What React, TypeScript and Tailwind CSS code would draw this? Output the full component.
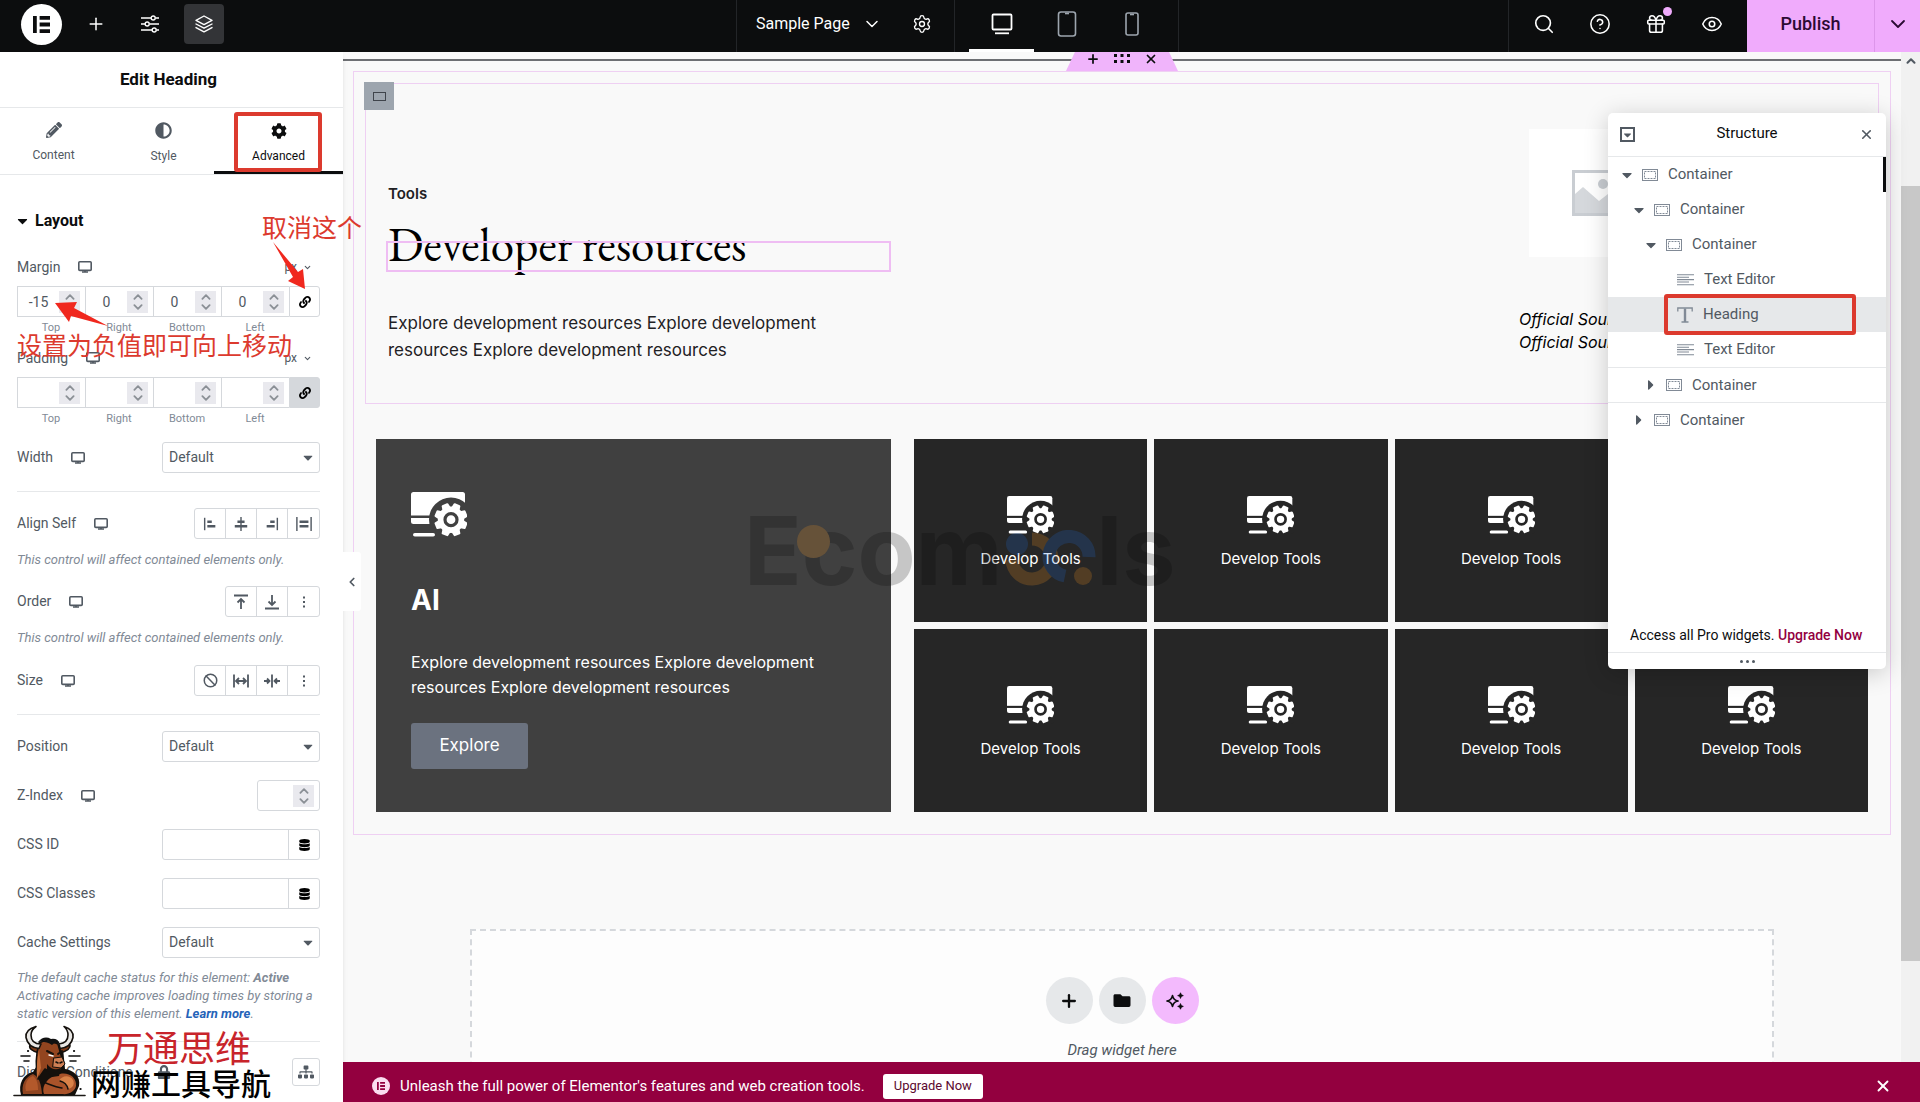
import type { ReactNode } from 'react'
import { Ban, ChevronDown, ChevronLeft, ChevronUp, CircleHelp, Eye, Gift, Plus, Search, Settings, X } from 'lucide-react'
import { FaAdjust, FaCaretDown, FaCaretRight, FaCog, FaDatabase, FaFolder, FaLink, FaLock, FaPencilAlt, FaSitemap } from 'react-icons/fa'

/* ---------- Icons ---------- */

const ElementorMark = ({ className }: { className: string }) => (
    <svg viewBox="0 0 18 18" className={className} fill="currentColor">
        <path d="M0 0h4v18H0zM7 0h11v4H7zM7 7h11v4H7zM7 14h11v4H7z" />
    </svg>
)

const SlidersIcon = () => (
    <svg viewBox="0 0 18 18" className="h-[18px] w-[18px]" fill="none" stroke="currentColor" strokeWidth="1.4">
        <path d="M0 3h10M14.5 3H18M0 9h4M8.5 9H18M0 15h11M15.5 15H18" />
        <circle cx="12.2" cy="3" r="2" />
        <circle cx="6.2" cy="9" r="2" />
        <circle cx="13.2" cy="15" r="2" />
    </svg>
)

const LayersIcon = () => (
    <svg viewBox="0 0 18 18" className="h-[18px] w-[18px]" fill="none" stroke="currentColor" strokeWidth="1.4" strokeLinejoin="round" strokeLinecap="round">
        <path d="M9 1l8 4.3-8 4.3-8-4.3zM1 9l8 4.2L17 9M1 12.6l8 4.2 8-4.2" />
    </svg>
)

const DesktopIcon = () => (
    <svg viewBox="0 0 22 22" className="h-[22px] w-[22px]" fill="none" stroke="currentColor" strokeWidth="1.8" strokeLinejoin="round">
        <rect x="1.5" y="1.5" width="19" height="15" rx="1" />
        <path d="M4 20.3h14" />
    </svg>
)

const TabletIcon = () => (
    <svg viewBox="0 0 20 26" className="h-[26px] w-[20px]" fill="none" stroke="currentColor" strokeWidth="1.6">
        <rect x="1.5" y="1" width="17" height="24" rx="2.5" />
        <path d="M8 2.5h4" />
    </svg>
)

const PhoneIcon = () => (
    <svg viewBox="0 0 14 24" className="h-6 w-[14px]" fill="none" stroke="currentColor" strokeWidth="1.6">
        <rect x="1" y="1" width="12" height="22" rx="2" />
        <path d="M5 2.5h4" />
    </svg>
)

const ScreenIcon = () => (
    <svg viewBox="0 0 14 12" className="h-3 w-[14px] text-[#515962]" fill="none" stroke="currentColor" strokeWidth="1.6">
        <rect x="0.8" y="0.8" width="12.4" height="8.6" rx="1" />
        <path d="M4 11h6M7 9v2" />
    </svg>
)

const ContainerIcon = () => (
    <svg viewBox="0 0 16 12" className="h-3 w-4" fill="none" stroke="currentColor">
        <rect x="0.5" y="0.5" width="15" height="11" strokeWidth="1" />
        <rect x="2.5" y="2.5" width="11" height="7" strokeWidth="1" strokeDasharray="2 1" />
    </svg>
)

const TextIcon = () => (
    <svg viewBox="0 0 17 12" className="h-3 w-[17px]" stroke="currentColor" strokeWidth="1.1">
        <path d="M0 .8h17M0 3.2h12M0 5.6h17M0 8h12M0 10.8h17" />
    </svg>
)

const HeadingIcon = () => (
    <svg viewBox="0 0 16 16" className="h-4 w-4" fill="none" stroke="currentColor">
        <path d="M.8 4.5V1h14.4v3.5M4.5 15h7" strokeWidth="1.3" />
        <path d="M8 1.5V15" strokeWidth="2.4" />
    </svg>
)

const SparkleIcon = () => (
    <svg viewBox="0 0 18 18" className="h-[18px] w-[18px]">
        <path d="M6.5 3.6Q7.4 8.1 12 9 7.4 9.9 6.5 14.4 5.6 9.9 1 9 5.6 8.1 6.5 3.6z" fill="none" stroke="currentColor" strokeWidth="1.7" strokeLinejoin="round" />
        <path d="M14.5.8l.8 2 2 .8-2 .8-.8 2-.8-2-2-.8 2-.8zM14.5 11.6l.8 2 2 .8-2 .8-.8 2-.8-2-2-.8 2-.8z" fill="currentColor" stroke="currentColor" strokeWidth=".8" />
    </svg>
)

const alignIcons = [
    { rule: 'M3 2v14', bars: 'M6 6.5h5M6 11.5h9' },
    { rule: 'M9 1v16', bars: 'M5 6.5h8M2 11.5h14' },
    { rule: 'M15 2v14', bars: 'M7 6.5h5M3 11.5h9' },
    { rule: 'M1 1v16M17 1v16', bars: 'M4 6.5h10M4 11.5h10' },
]

const AlignIcon = ({ rule, bars }: { rule: string; bars: string }) => (
    <svg viewBox="0 0 18 18" className="h-4 w-4" fill="none" stroke="currentColor">
        <path d={rule} strokeWidth="1.6" />
        <path d={bars} strokeWidth="2.8" />
    </svg>
)

const StrokeIcon = ({ d }: { d: string }) => (
    <svg viewBox="0 0 16 16" className="h-4 w-4" fill="none" stroke="currentColor" strokeWidth="1.8">
        <path d={d} />
    </svg>
)

const DotsIcon = () => (
    <svg viewBox="0 0 4 14" className="h-[14px] w-1" fill="currentColor">
        <path d="M1 1.5h2v2H1zM1 6h2v2H1zM1 10.5h2v2H1z" />
    </svg>
)

const teeth = [0, 45, 90, 135, 180, 225, 270, 315]

const DevIcon = ({ cut, className }: { cut: string; className: string }) => (
    <svg viewBox="0 0 56 45" className={className}>
        <rect width="54" height="32" rx="2.5" fill="#fff" />
        <rect y="23.5" width="54" height="2.5" fill={cut} />
        <circle cx="40" cy="27.5" r="22" fill={cut} />
        <rect x="2" y="41" width="22" height="3.6" rx="1.8" fill="#fff" />
        <circle cx="40" cy="27.7" r="13.2" fill="#fff" />
        {teeth.map((a) => (
            <path key={a} d="M35.5 17l1-5.3q.3-.7 1-.7h5q.7 0 1 .7l1 5.3z" fill="#fff" transform={`rotate(${a + 22.5} 40 27.7)`} />
        ))}
        <circle cx="40" cy="27.7" r="6" fill="#fff" stroke={cut} strokeWidth="3.2" />
    </svg>
)

const Bull = () => (
    <svg viewBox="0 0 74 74" className="h-[74px] w-[74px] shrink-0" strokeLinejoin="round" strokeLinecap="round">
        <path d="M1 71.5h71" stroke="#1c1a17" strokeWidth="1.6" />
        <path d="M8 32h9M11 37h5M56 32h11M57 37h6" stroke="#111" strokeWidth="1.6" />
        <path d="M15 27h.1M61 27h.1M67.500 65h.1" stroke="#111" strokeWidth="2.2" />
        {/* body */}
        <path d="M8 71C5 60 10 50 20 48l5-8 1-15 24-1 2 21c8 1 16 7 14 17l-4 9z" fill="#14100c" />
        <path d="M10 70c-2-9 2-17 10-20 6 3 8 9 9 20z" fill="#8f4420" />
        <path d="M13 67c-2-6 1-13 7-15 4 3 5 8 5 14z" fill="#b3592b" />
        <path d="M31 70c-3-9 5-18 16-20 9-2 17 4 16 12-1 5-7 9-14 8z" fill="#a9532a" />
        <path d="M46 57c3-6 11-6 14-1 2 4 0 8-5 9-2-4-5-7-9-8z" fill="#d98248" />
        <path d="M30 58c6 2 12 5 19 6M47 57c4 1 7 4 8 8" stroke="#14100c" strokeWidth="1.5" fill="none" />
        {/* head */}
        <path d="M26 24l-9-3q-2 5 9 8zM47 24l10-3q1 5-10 8z" fill="#7c3917" stroke="#14100c" strokeWidth="1.6" />
        <path d="M26 19q9-5 19 1l3 11 3 9-4 8-7 2-8-5-7 10q-4-17 1-36z" fill="#93451f" stroke="#14100c" strokeWidth="1.6" />
        <path d="M26 26q-3 14-2 29l4-11z" fill="#c56d38" />
        <path d="M41 34l8-1 3 7-4 4-8-1z" fill="#cf8055" stroke="#14100c" />
        <path d="M43 38l2 1M49 38l-2 1" stroke="#14100c" strokeWidth="1.6" />
        <path d="M34 27l6 3M49 27l-4 3" stroke="#14100c" strokeWidth="2" />
        <path d="M36 31l4 1" stroke="#fff" strokeWidth="1.4" />
        <path d="M34 40q6 8 14 4l-2 8-7 1-5-5z" fill="#14100c" />
        <path d="M25 18q6-7 13-3 7-1 9 5-6-2-8 1-6-4-14-3z" fill="#111" />
        {/* horns */}
        <path d="M27 20q-10 0-10-9 0-5 5-8.500-11 3-10 11 2 10 13 11zM45 20q9-1 9-9 0-5-4-8.500 10 3 9 11-2 10-13 11z" transform="translate(1 0)" fill="#e9e7e4" stroke="#14100c" strokeWidth="1.6" />
    </svg>
)

/* ---------- Sidebar ---------- */

const Field = ({ label, id, screen, children }: { label: string; id?: string; screen?: boolean; children: ReactNode }) => (
    <div className="flex h-[31px] items-center justify-between">
        <div className="flex items-center gap-[18px]">
            <label htmlFor={id}>{label}</label>
            {screen && <ScreenIcon />}
        </div>
        {children}
    </div>
)

const Select = ({ id }: { id: string }) => (
    <div className="relative h-full w-[158px]">
        <select id={id} className="h-full w-full appearance-none rounded-[3px] border border-[#d5d8dc] bg-white px-1.5 text-[14px]">
            <option>Default</option>
        </select>
        <FaCaretDown className="pointer-events-none absolute right-1.5 top-2 h-[15px] w-3" />
    </div>
)

const Stepper = () => (
    <span className="flex h-[22px] w-[21px] shrink-0 flex-col items-center justify-center gap-1 bg-[#e9e9ee] text-[#8b9096]">
        <ChevronUp className="h-1.5 w-3" viewBox="4 7 16 10" strokeWidth={3} />
        <ChevronDown className="h-1.5 w-3" viewBox="4 7 16 10" strokeWidth={3} />
    </span>
)

const sides = ['Top', 'Right', 'Bottom', 'Left']

const Dimensions = ({ name, values, linked }: { name: string; values: string[]; linked?: boolean }) => (
    <div>
        <div className="flex h-5 items-center justify-between">
            <div className="flex items-center gap-[18px]">
                <span>{name}</span>
                <ScreenIcon />
            </div>
            <button className="flex items-center gap-1.5 pr-2 text-[12px]">px <ChevronDown className="h-[9px] w-[9px]" strokeWidth={3} /></button>
        </div>
        <div className="mt-[9px] flex">
            {sides.map((side, i) => (
                <div key={side} className="w-[68px]">
                    <div className="flex h-[31px] items-center border-y border-l border-[#d5d8dc] pr-[5px]">
                        <input id={`${name}-${side}`} defaultValue={values[i]} className="h-full w-0 flex-1 text-center text-[14px] outline-none" />
                        <Stepper />
                    </div>
                    <label htmlFor={`${name}-${side}`} className="mt-1 block text-center text-[11px] leading-[14px] text-[#818a96]">{side}</label>
                </div>
            ))}
            <button aria-label="Link values" className={linked ? 'flex h-[31px] flex-1 items-center justify-center rounded-r-[3px] border border-[#d5d8dc] bg-[#d5d8dc] text-black' : 'flex h-[31px] flex-1 items-center justify-center rounded-r-[3px] border border-[#d5d8dc] text-black'}>
                <FaLink className="h-3 w-3" />
            </button>
        </div>
    </div>
)

const Choices = ({ icons }: { icons: ReactNode[] }) => (
    <div className="flex h-full divide-x divide-[#d5d8dc] rounded-[3px] border border-[#d5d8dc]">
        {icons.map((icon, i) => (
            <button key={i} className="flex w-[31px] items-center justify-center">{icon}</button>
        ))}
    </div>
)

const Note = () => <p className="mt-3 text-[13px] italic leading-[18px] text-[#818a96]">This control will affect contained elements only.</p>

const Divider = () => <hr className="mb-4 mt-[18px] border-[#e6e8ea]" />

const TagInput = ({ id }: { id: string }) => (
    <div className="flex h-full w-[158px] rounded-[3px] border border-[#d5d8dc]">
        <input id={id} className="w-0 flex-1 px-2 outline-none" />
        <button aria-label="Dynamic tags" className="flex w-[31px] items-center justify-center border-l border-[#d5d8dc] text-black">
            <FaDatabase className="h-3 w-[11px]" />
        </button>
    </div>
)

const Sidebar = () => (
    <aside className="relative z-10 flex w-[343px] shrink-0 flex-col bg-white text-[14px] text-[#515962] shadow-md">
        <h1 className="flex h-[55px] items-center justify-center pr-1.5 text-[17px] font-bold text-[#0c0d0e]">Edit Heading</h1>
        <nav className="grid h-[68px] grid-cols-[107px_107px_1fr] border-y border-[#e6e8ea] text-[12px]">
            <button className="flex flex-col items-center justify-center gap-2 pt-1">
                <FaPencilAlt className="h-4 w-4" />
                Content
            </button>
            <button className="flex flex-col items-center justify-center gap-2 pl-1.5 pt-1">
                <FaAdjust className="h-[17px] w-[17px]" />
                Style
            </button>
            <button className="relative flex flex-col items-center justify-center gap-2 border-b-[3px] border-[#0c0d0e] pt-2 text-[#0c0d0e]">
                <FaCog className="h-4 w-4" />
                Advanced
                <span className="absolute left-5 top-1 h-[60px] w-[88px] rounded-[3px] border-4 border-[#dc3a2e]" />
            </button>
        </nav>

        <div className="flex flex-col pl-[17px] pr-[23px] pt-[34px]">
            <h2 className="flex h-6 items-center gap-[7px] text-[16px] font-bold text-[#0c0d0e]">
                <FaCaretDown className="h-4 w-[11px]" />
                Layout
            </h2>

            <div className="relative mt-6">
                <Dimensions name="Margin" values={['-15', '0', '0', '0']} />
                {/* Annotations */}
                <p className="absolute -top-[46px] left-[245px] whitespace-nowrap font-['Noto_Sans_CJK_SC',sans-serif] text-[25px] leading-[30px] text-[#dc3a2e]">取消这个</p>
                <svg viewBox="0 0 60 60" className="absolute -top-4 left-[250px] h-[60px] w-[60px]" fill="#f0281e">
                    <path d="M6 1l25 30 5-3 2 20-17-8 5-4z" />
                </svg>
                <svg viewBox="0 0 60 40" className="absolute left-[34px] top-[38px] h-10 w-[60px]" fill="#f0281e">
                    <path d="M4 8l22-1-3 6 34 18-37-10-2 6z" />
                </svg>
                <p className="absolute left-0 top-[72px] z-10 whitespace-nowrap font-['Noto_Sans_CJK_SC',sans-serif] text-[25px] leading-[30px] text-[#dc3a2e]">设置为负值即可向上移动</p>
            </div>
            <div className="mb-4 mt-[13px]">
                <Dimensions name="Padding" values={['', '', '', '']} linked />
            </div>
            <Field label="Width" id="width" screen><Select id="width" /></Field>

            <Divider />
            <Field label="Align Self" screen>
                <Choices icons={alignIcons.map((icon) => <AlignIcon key={icon.rule} {...icon} />)} />
            </Field>
            <Note />
            <div className="mt-[17px]">
                <Field label="Order" screen>
                    <Choices icons={[
                        <StrokeIcon key="start" d="M1 1.500h14M8 15V5M4.500 8.500L8 5l3.500 3.500" />,
                        <StrokeIcon key="end" d="M1 14.500h14M8 1v10M4.500 7.500L8 11l3.500-3.500" />,
                        <DotsIcon key="more" />,
                    ]} />
                </Field>
                <Note />
            </div>
            <div className="mt-[18px]">
                <Field label="Size" screen>
                    <Choices icons={[
                        <Ban key="none" className="h-[15px] w-[15px]" strokeWidth={2.400} />,
                        <StrokeIcon key="grow" d="M1 1.500v13M15 1.500v13M3 8h10M6 5L3 8l3 3M10 5l3 3-3 3" />,
                        <StrokeIcon key="shrink" d="M8 1.500v13M0 8h5.500M16 8h-5.500M3 5.500L5.500 8 3 10.500M13 5.500L10.500 8l2.500 2.500" />,
                        <DotsIcon key="more" />,
                    ]} />
                </Field>
            </div>

            <Divider />
            <div className="flex flex-col gap-[18px]">
                <Field label="Position" id="position"><Select id="position" /></Field>
                <Field label="Z-Index" id="z-index" screen>
                    <div className="flex h-full w-[63px] items-center rounded-[3px] border border-[#d5d8dc] pr-[5px]">
                        <input id="z-index" className="h-full w-0 flex-1 outline-none" />
                        <Stepper />
                    </div>
                </Field>
                <Field label="CSS ID" id="css-id"><TagInput id="css-id" /></Field>
                <Field label="CSS Classes" id="css-classes"><TagInput id="css-classes" /></Field>
                <Field label="Cache Settings" id="cache"><Select id="cache" /></Field>
            </div>
            <p className="mt-[11px] whitespace-nowrap text-[13px] italic leading-[18px] text-[#818a96]">
                The default cache status for this element: <b>Active</b><br />
                Activating cache improves loading times by storing a<br />
                static version of this element. <a href="#" className="font-bold text-[#2563b8]">Learn more</a>.
            </p>
            <Divider />
            <div className="flex h-7 items-center justify-between">
                <span className="flex items-center gap-6">Display Conditions <FaLock className="h-[14px] w-[14px]" /></span>
                <button aria-label="Edit conditions" className="flex h-7 w-7 items-center justify-center rounded-[3px] border border-[#d5d8dc]">
                    <FaSitemap className="h-4 w-4" />
                </button>
            </div>
        </div>

        {/* Site stamp */}
        <div className="absolute bottom-0 left-[13px] flex items-end pb-1 font-['Noto_Sans_CJK_SC',sans-serif]">
            <Bull />
            <div className="ml-1 flex flex-col whitespace-nowrap">
                <span className="pl-4 text-[36px] leading-[40px] text-[#c8242b]">万通思维</span>
                <span className="text-[30px] font-medium leading-[32px] text-black">网赚工具导航</span>
            </div>
        </div>

        <button aria-label="Collapse panel" className="absolute -right-[18px] top-[500px] flex h-[59px] w-[18px] items-center justify-center rounded-r-[3px] bg-white">
            <ChevronLeft className="h-[14px] w-[14px]" strokeWidth={3} />
        </button>
    </aside>
)

/* ---------- Structure panel ---------- */

const tree = [
    { name: 'Container', pad: 'pl-[13px]', open: true },
    { name: 'Container', pad: 'pl-[25px]', open: true },
    { name: 'Container', pad: 'pl-[37px]', open: true },
    { name: 'Text Editor', pad: 'pl-[69px]' },
    { name: 'Heading', pad: 'pl-[69px]' },
    { name: 'Text Editor', pad: 'pl-[69px]' },
    { name: 'Container', pad: 'pl-[37px] border-t border-[#e6e8ea]', open: false },
    { name: 'Container', pad: 'pl-[25px] border-t border-[#e6e8ea]', open: false },
]

const Structure = () => (
    <section className="absolute right-[34px] top-[61px] z-10 flex h-[556px] w-[278px] flex-col rounded-[5px] bg-white text-[15px] text-[#515962] shadow-[0_4px_24px_rgba(0,0,0,0.2)]">
        <header className="flex h-11 shrink-0 items-center justify-between border-b border-[#e6e8ea] px-3">
            <button aria-label="Collapse all" className="flex h-[15px] w-[15px] items-center justify-center border-2 border-[#515962]">
                <FaCaretDown className="h-3 w-3" />
            </button>
            <h2 className="pb-0.5 text-[#0c0d0e]">Structure</h2>
            <button aria-label="Close structure"><X className="h-[15px] w-[15px]" strokeWidth={2.500} /></button>
        </header>
        <ul className="relative flex-1">
            {tree.map((item, i) => (
                <li key={i} className={item.name === 'Heading' ? 'relative bg-[#e6e8ea]' : 'relative'}>
                    <button className={`flex h-[35px] w-full items-center ${item.pad}`}>
                        {item.open === true && <FaCaretDown className="mr-[9px] h-4 w-3" />}
                        {item.open === false && <FaCaretRight className="mr-[9px] h-4 w-3" />}
                        <span className="mr-[10px] text-[#818a96]">
                            {item.name === 'Container' && <ContainerIcon />}
                            {item.name === 'Text Editor' && <TextIcon />}
                            {item.name === 'Heading' && <HeadingIcon />}
                        </span>
                        {item.name}
                    </button>
                    {item.name === 'Heading' && <span className="absolute -top-[3px] left-14 h-[41px] w-[192px] rounded-[3px] border-4 border-[#dc3a2e]" />}
                </li>
            ))}
            <li className="absolute right-0 top-0 h-[35px] w-[3px] bg-[#0c0d0e]" />
        </ul>
        <p className="whitespace-nowrap px-[22px] pb-2 text-[14px] leading-[18px] text-[#0c0d0e]">
            Access all Pro widgets. <a href="#" className="font-medium text-[#93003f]">Upgrade Now</a>
        </p>
        <footer className="flex h-[17px] items-center justify-center gap-[3px] border-t border-[#e6e8ea]">
            <span className="h-[3px] w-[3px] rounded-full bg-[#515962]" />
            <span className="h-[3px] w-[3px] rounded-full bg-[#515962]" />
            <span className="h-[3px] w-[3px] rounded-full bg-[#515962]" />
        </footer>
    </section>
)

/* ---------- Canvas ---------- */

const Watermark = () => (
    <div className="pointer-events-none absolute left-[401px] top-[440px] flex items-end font-['Inter',sans-serif] text-[95px] font-bold leading-[117px] text-black opacity-20">
        <span className="relative">
            Ecom
            <span className="absolute left-[53px] top-[33px] h-[33px] w-[33px] rounded-full bg-[#ff9a1f]" />
        </span>
        <svg viewBox="0 0 94 56" className="mb-[23px] h-14 w-[94px]" fill="none" strokeWidth="13">
            <path d="M9 30a20 20 0 1 0 20-21" stroke="#ff9a1f" />
            <circle cx="14" cy="14" r="11" fill="#1d6fe0" />
            <path d="M62 46a20 20 0 1 1 24-19" stroke="#1d6fe0" />
            <circle cx="80" cy="46" r="9" fill="#ff9a1f" />
        </svg>
        <span>ls</span>
    </div>
)

const Tile = () => (
    <div className="flex flex-col items-center justify-center bg-[#262626] pt-1.5 text-white">
        <DevIcon cut="#262626" className="h-[38px] w-[47px]" />
        <h4 className="mt-[13px] text-[15px] leading-6">Develop Tools</h4>
    </div>
)

const Canvas = () => (
    <div className="relative flex-1 overflow-hidden bg-[#f9f9f9] font-['Inter',sans-serif] text-[#1f2124]">
        <div className="mt-[7px] h-0.5 bg-[#6d6f73]" />

        {/* Section handle */}
        <div className="absolute left-1/2 top-0 flex h-[19px] w-[112px] -translate-x-1/2 justify-center gap-[14px] bg-[#f0b4fb] pb-2 text-[#0c0d0e] [clip-path:polygon(8%_0,92%_0,100%_100%,0_100%)]">
            <button aria-label="Add section"><Plus className="h-[14px] w-[14px]" strokeWidth={3} /></button>
            <svg viewBox="0 0 16 10" className="mt-0.5 h-[10px] w-4" fill="currentColor">
                <path d="M0 0h3v3H0zM6.500 0h3v3h-3zM13 0h3v3h-3zM0 6h3v3H0zM6.500 6h3v3h-3zM13 6h3v3h-3z" />
            </svg>
            <button aria-label="Delete section"><X className="h-[14px] w-[14px]" strokeWidth={3} /></button>
        </div>

        <div className="mx-[10px] mt-[10px] border border-[#efd0f3] px-[11px] pb-[22px] pt-[11px]">
            <div className="relative flex h-[321px] justify-between border border-[#efd0f3] px-[22px] pt-[98px]">
                <button aria-label="Edit container" className="absolute -left-0.5 -top-0.5 flex h-7 w-[30px] items-center justify-center bg-[#9da5ae]">
                    <span className="h-[9px] w-[13px] border border-[#3f444b]" />
                </button>
                <div className="w-[501px]">
                    <p className="text-[15px] font-semibold leading-6">Tools</p>
                    <div className="mt-[37px] flex h-[27px] items-start outline-2 outline-[#efbdf3]">
                        <h2 className="-mt-6 whitespace-nowrap font-['EB_Garamond','Liberation_Serif',serif] text-[47px] leading-[52px] text-black">Developer resources</h2>
                    </div>
                    <p className="mt-10 text-[17px] leading-[27px]">Explore development resources Explore development resources Explore development resources</p>
                </div>
                <div className="-mt-[53px] w-[337px]">
                    <div className="ml-[10px] flex h-32 w-32 items-center justify-center bg-white">
                        <svg viewBox="0 0 60 46" className="mr-[-18px] h-[46px] w-[60px]">
                            <rect x="1.500" y="1.500" width="57" height="43" fill="#fff" stroke="#c9cdd2" strokeWidth="3" />
                            <circle cx="31" cy="14" r="5" fill="#c9cdd2" />
                            <path d="M3 24l8-7 16 14 9-7 21 16v3H3z" fill="#d5d8dc" />
                        </svg>
                    </div>
                    <p className="mt-[51px] text-[16px] italic leading-[23px] text-black">Official Source<br />Official Source</p>
                </div>
            </div>

            <div className="mt-[35px] flex min-h-[373px] gap-[23px] px-[11px]">
                <div className="w-[515px] shrink-0 bg-[#404040] px-[35px] pt-[53px] text-white">
                    <DevIcon cut="#404040" className="h-[45px] w-14" />
                    <h3 className="mt-[45px] text-[28px] font-bold leading-9">AI</h3>
                    <p className="mt-8 text-[16px] leading-[25px]">Explore development resources Explore development resources Explore development resources</p>
                    <button className="mt-[23px] h-[46px] w-[117px] rounded-[3px] bg-[#6b727f] text-[17px]">Explore</button>
                </div>
                <div className="grid flex-1 grid-cols-4 grid-rows-2 gap-[7px]">
                    {teeth.map((n) => <Tile key={n} />)}
                </div>
            </div>
        </div>

        {/* Drop zone */}
        <div className="mx-[127px] mt-[94px] flex h-[200px] flex-col items-center border-2 border-dashed border-[#d5d8dc] bg-[#fdfdfd] pt-[46px] text-[#0c0d0e]">
            <div className="flex gap-1.5">
                <button aria-label="Add container" className="flex h-[47px] w-[47px] items-center justify-center rounded-full bg-[#e6e8ea]"><Plus className="h-5 w-5" strokeWidth={2.800} /></button>
                <button aria-label="Add template" className="flex h-[47px] w-[47px] items-center justify-center rounded-full bg-[#e6e8ea]"><FaFolder className="h-[17px] w-[18px]" /></button>
                <button aria-label="Build with AI" className="flex h-[47px] w-[47px] items-center justify-center rounded-full bg-[#f3bafd]"><SparkleIcon /></button>
            </div>
            <p className="mt-[14px] font-['Roboto',sans-serif] text-[15px] italic leading-6 text-[#515962]">Drag widget here</p>
        </div>

        <Watermark />
    </div>
)

/* ---------- Top bar ---------- */

const TopBar = () => (
    <header className="grid h-[52px] shrink-0 grid-cols-[736fr_443px_741fr] bg-[#0c0d0e] text-white">
        <div className="flex items-center pb-1 pl-[21px]">
            <button aria-label="Elementor" className="flex h-[41px] w-[41px] items-center justify-center rounded-full bg-white text-[#0c0d0e]">
                <ElementorMark className="h-[17px] w-[17px]" />
            </button>
            <button aria-label="Add element" className="ml-[24px]"><Plus className="h-5 w-5" strokeWidth={1.800} /></button>
            <button aria-label="Site settings" className="ml-[35px]"><SlidersIcon /></button>
            <button aria-label="Structure" className="ml-[25px] flex h-10 w-10 items-center justify-center rounded-[4px] bg-[#333437]"><LayersIcon /></button>
        </div>
        <div className="flex border-x border-[#232528] text-[16px]">
            <div className="flex w-[218px] items-center justify-between border-r border-[#232528] pb-1 pl-[19px] pr-[22px]">
                <button className="flex items-center gap-3">Sample Page <ChevronDown className="h-5 w-5" strokeWidth={1.800} /></button>
                <button aria-label="Page settings"><Settings className="h-5 w-5" strokeWidth={1.600} /></button>
            </div>
            <div className="flex flex-1 pl-[14px]">
                <button aria-label="Desktop" className="flex w-[65px] items-center justify-center border-b-[3px] border-white pb-px"><DesktopIcon /></button>
                <button aria-label="Tablet" className="flex w-[65px] items-center justify-center pb-1 text-[#9da5ae]"><TabletIcon /></button>
                <button aria-label="Phone" className="flex w-[65px] items-center justify-center pb-1 text-[#9da5ae]"><PhoneIcon /></button>
            </div>
        </div>
        <div className="flex justify-end">
            <div className="flex items-center gap-[34px] border-l border-[#232528] pb-1 pl-6 pr-6">
                <button aria-label="Search"><Search className="h-[22px] w-[22px]" strokeWidth={1.800} /></button>
                <button aria-label="Help"><CircleHelp className="h-[22px] w-[22px]" strokeWidth={1.700} /></button>
                <button aria-label="What's new" className="relative">
                    <Gift className="h-[22px] w-[22px]" strokeWidth={1.700} />
                    <span className="absolute -top-1.5 left-[18px] h-[9px] w-[9px] rounded-full bg-[#f0abfc]" />
                </button>
                <button aria-label="Preview"><Eye className="h-[22px] w-[22px]" strokeWidth={1.700} /></button>
            </div>
            <button className="w-[127px] bg-[#f0abfc] pb-1.5 text-[18px] font-medium text-[#2b0a33]">Publish</button>
            <button aria-label="Save options" className="flex w-[46px] items-center justify-center border-l border-[#dd96ea] bg-[#f0abfc] pb-1 text-[#2b0a33]"><ChevronDown className="h-6 w-6" strokeWidth={1.800} /></button>
        </div>
    </header>
)

const App = () => (
    <div className="flex h-screen flex-col overflow-hidden font-['Roboto',sans-serif]">
        <TopBar />
        <div className="flex min-h-0 flex-1">
            <Sidebar />
            <main className="relative flex min-w-0 flex-1 flex-col">
                <div className="flex min-h-0 flex-1">
                    <Canvas />
                    {/* Scroll bar */}
                    <div className="w-[19px] shrink-0 bg-[#f1f1f1]">
                        <ChevronUp className="mx-auto mt-0.5 h-[14px] w-[14px] text-[#515962]" strokeWidth={3.500} />
                        <div className="mt-[118px] h-[775px] bg-[#c8c8c8]" />
                    </div>
                </div>
                <Structure />
                <div className="flex h-10 shrink-0 items-center bg-[#93003f] pl-[29px] pr-7 pt-2 text-white">
                    <span className="flex h-[18px] w-[18px] items-center justify-center rounded-full bg-[#fbdcf0] text-[#93003f]"><ElementorMark className="h-2 w-2" /></span>
                    <p className="ml-[10px] text-[15px]">Unleash the full power of Elementor's features and web creation tools.</p>
                    <button className="ml-[18px] h-[25px] w-[100px] rounded-[3px] bg-white text-[13px] text-[#5c0a30]">Upgrade Now</button>
                    <button aria-label="Dismiss" className="ml-auto"><X className="h-[18px] w-[18px]" strokeWidth={2.500} /></button>
                </div>
            </main>
        </div>
    </div>
)

export default App
